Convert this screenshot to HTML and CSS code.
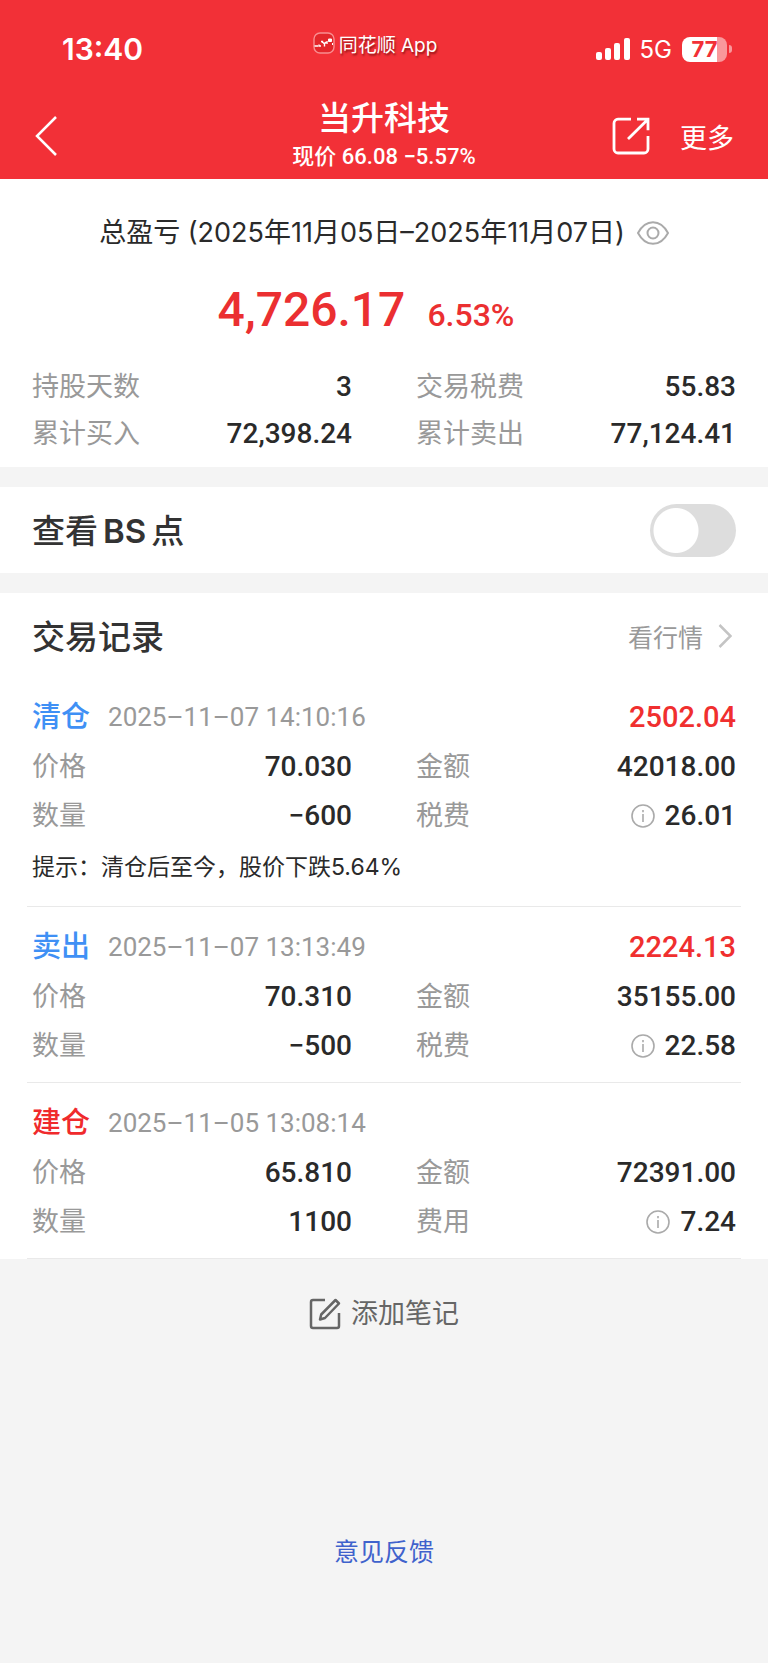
FILE: index.html
```html
<!DOCTYPE html>
<html lang="zh-CN">
<head>
<meta charset="utf-8">
<meta name="viewport" content="width=device-width, initial-scale=1">
<title>当升科技</title>
<link rel="stylesheet" href="styles.css">
</head>
<body>
<header class="top">
  <div class="status">
    <span class="time">13:40</span>
    <span class="app">
      <svg width="22" height="22" viewBox="0 0 22 22" fill="none" aria-hidden="true"><rect x="1" y="1" width="20" height="20" rx="6" fill="#e3262b" stroke="#f88d90" stroke-width="1.4"/><path d="M1.500 14h3.500M6 12.500v1.500h2M8 9.500h1.500v1.500M11.500 10.500v4M10 10.500l1.500 1.500 1.500-2M14 9v3" stroke="#fff" stroke-width="1.400"/><path d="M15.500 7h3v2.500h-3zM19.500 11v2" fill="#fff" stroke="#fff" stroke-width="1"/></svg>
      <span>同花顺 App</span>
    </span>
    <span class="signals">
      <svg width="34" height="24" viewBox="0 0 34 24" fill="#fff" aria-hidden="true"><rect y="15" width="6" height="8" rx="2"/><rect x="9" y="11" width="6" height="12" rx="2"/><rect x="18" y="6" width="6" height="17" rx="2"/><rect x="28" y="1" width="6" height="22" rx="2"/></svg>
      <span class="net">5G</span>
      <span class="battery"><span class="cell">77</span><span class="cap"></span></span>
    </span>
  </div>
  <nav class="nav">
    <button class="icon-btn" aria-label="返回"><svg width="24" height="42" viewBox="0 0 24 42" fill="none" stroke="#fff" stroke-width="2.500"><path d="M22 2 3 21l19 19"/></svg></button>
    <div class="heading">
      <h1>当升科技</h1>
      <p>现价 66.08 −5.57%</p>
    </div>
    <div class="actions">
      <button class="icon-btn" aria-label="分享"><svg width="38" height="38" viewBox="0 0 38 38" fill="none" stroke="#fff" stroke-width="2.800"><path d="M19 2.200H6a4 4 0 0 0-4 4V32a4 4 0 0 0 4 4h26a4 4 0 0 0 4-4V19M25 2.200h11v11M36 2.200 16 22"/></svg></button>
      <button class="more">更多</button>
    </div>
  </nav>
</header>
<main>
  <section class="summary">
    <div class="period"><span>总盈亏 (2025年11月05日–2025年11月07日)</span>
      <button class="icon-btn" aria-label="隐藏金额"><svg width="32" height="24" viewBox="0 0 32 24" fill="none" stroke="#aaa" stroke-width="2"><path d="M1 12C5 4.500 10 1.200 16 1.200S27 4.500 31 12C27 19.500 22 22.800 16 22.800S5 19.500 1 12z"/><circle cx="16" cy="12" r="5.500"/></svg></button>
    </div>
    <div class="profit"><strong>4,726.17</strong><span>6.53%</span></div>
    <dl class="grid">
      <div><dt>持股天数</dt><dd>3</dd></div>
      <div><dt>交易税费</dt><dd>55.83</dd></div>
      <div><dt>累计买入</dt><dd>72,398.24</dd></div>
      <div><dt>累计卖出</dt><dd>77,124.41</dd></div>
    </dl>
  </section>
  <section class="bs">
    <label class="title" for="bs">查看<span class="latin">BS</span>点</label>
    <input class="switch" type="checkbox" role="switch" id="bs">
  </section>
  <section class="records">
    <div class="records-head">
      <h2 class="title">交易记录</h2>
      <a class="quote" href="#">看行情<svg width="14" height="24" viewBox="0 0 14 24" fill="none" stroke="#c4c4c4" stroke-width="2.500"><path d="m1.500 1 11 11-11 11"/></svg></a>
    </div>
    <article class="record">
      <header><h3 class="sell">清仓</h3><time>2025–11–07 14:10:16</time><b>2502.04</b></header>
      <dl class="grid">
        <div><dt>价格</dt><dd>70.030</dd></div>
        <div><dt>金额</dt><dd>42018.00</dd></div>
        <div><dt>数量</dt><dd>−600</dd></div>
        <div><dt>税费</dt><dd><button class="icon-btn" aria-label="税费说明"><svg class="info" viewBox="0 0 24 24" fill="none" stroke="#aaa" stroke-width="1.600"><circle cx="12" cy="12" r="11"/><path d="M12 10v8M12 6v2.200"/></svg></button>26.01</dd></div>
      </dl>
      <p class="tip">提示：清仓后至今，股价下跌5.64%</p>
    </article>
    <article class="record">
      <header><h3 class="sell">卖出</h3><time>2025–11–07 13:13:49</time><b>2224.13</b></header>
      <dl class="grid">
        <div><dt>价格</dt><dd>70.310</dd></div>
        <div><dt>金额</dt><dd>35155.00</dd></div>
        <div><dt>数量</dt><dd>−500</dd></div>
        <div><dt>税费</dt><dd><button class="icon-btn" aria-label="税费说明"><svg class="info" viewBox="0 0 24 24" fill="none" stroke="#aaa" stroke-width="1.600"><circle cx="12" cy="12" r="11"/><path d="M12 10v8M12 6v2.200"/></svg></button>22.58</dd></div>
      </dl>
    </article>
    <article class="record">
      <header><h3 class="buy">建仓</h3><time>2025–11–05 13:08:14</time></header>
      <dl class="grid">
        <div><dt>价格</dt><dd>65.810</dd></div>
        <div><dt>金额</dt><dd>72391.00</dd></div>
        <div><dt>数量</dt><dd>1100</dd></div>
        <div><dt>费用</dt><dd><button class="icon-btn" aria-label="费用说明"><svg class="info" viewBox="0 0 24 24" fill="none" stroke="#aaa" stroke-width="1.600"><circle cx="12" cy="12" r="11"/><path d="M12 10v8M12 6v2.200"/></svg></button>7.24</dd></div>
      </dl>
    </article>
  </section>
</main>
<footer class="foot">
  <button class="note"><svg width="32" height="32" viewBox="0 0 32 32" fill="none" stroke="#666" stroke-width="2.500"><path d="M16 2H4a2 2 0 0 0-2 2v24a2 2 0 0 0 2 2h24a2 2 0 0 0 2-2V15"/><path d="M26.500 2 30 5.500 16 20l-5 1.500L12.200 16.500z" stroke-linejoin="round"/></svg>添加笔记</button>
  <a class="feedback" href="#">意见反馈</a>
</footer>
</body>
</html>
```
FILE: styles.css
```css
* { box-sizing: border-box; }
body, h1, h2, h3, p, dl, dd { margin: 0; }
body {
  background: #f4f4f4;
  color: #2a2a2a;
  font-family: Inter, "Noto Sans CJK SC", sans-serif;
  font-size: 27px;
}
button { padding: 0; border: 0; background: none; color: inherit; font: inherit; }
a { text-decoration: none; }
svg { display: block; }
.icon-btn { display: inline-flex; }

.top { background: #f23037; color: #fff; }
.status {
  display: grid;
  grid-template-columns: 1fr auto 1fr;
  align-items: center;
  height: 98px;
  padding: 0 36px 0 62px;
}
.time { font-size: 30px; font-weight: 600; }
.app {
  display: flex;
  align-items: center;
  gap: 4px;
  padding: 0 44px 12px 0;
  font-size: 19px;
  text-shadow: 1px 2px 2px rgba(80, 0, 0, .6);
}
.signals { display: flex; justify-content: flex-end; align-items: center; gap: 10px; }
.net { font-size: 24px; }
.battery { display: flex; align-items: center; gap: 2px; }
.cell {
  width: 45px;
  border-radius: 8px;
  background: linear-gradient(90deg, #fff 77%, #f9989b 77%);
  color: #f23037;
  font-size: 22px;
  font-weight: 700;
  line-height: 25px;
  text-align: center;
}
.cap { width: 3px; height: 8px; border-radius: 0 4px 4px 0; background: #f9989b; }

.nav {
  display: grid;
  grid-template-columns: 1fr auto 1fr;
  align-items: center;
  height: 81px;
  padding: 0 34px 5px;
}
.heading { text-align: center; }
.heading h1 { font-size: 33px; font-weight: 500; line-height: 40px; }
.heading p {
  margin-top: 2px;
  font-family: Roboto, "Noto Sans CJK SC", sans-serif;
  font-size: 22px;
  font-weight: 500;
  line-height: 34px;
}
.actions { display: flex; justify-content: flex-end; align-items: center; gap: 30px; }

.summary { padding: 27px 32px 10px; background: #fff; }
.period { display: flex; justify-content: center; align-items: center; gap: 12px; line-height: 54px; }
.profit {
  display: flex;
  justify-content: center;
  align-items: baseline;
  gap: 22px;
  padding: 14px 36px 12px 0;
  color: #eb2f31;
  font-family: Roboto, sans-serif;
  line-height: 72px;
}
.profit strong { font-size: 48px; font-weight: 500; }
.profit span { font-size: 32px; font-weight: 500; }

.grid { display: grid; grid-template-columns: 1fr 1fr; column-gap: 64px; line-height: 49px; }
.grid > div { display: flex; justify-content: space-between; }
.summary .grid { line-height: 47px; }
dt { color: #999; }
dd {
  display: flex;
  align-items: center;
  gap: 10px;
  font-family: Roboto, sans-serif;
  font-size: 28px;
  font-weight: 500;
}
.info { width: 24px; height: 24px; }

.bs {
  display: flex;
  justify-content: space-between;
  align-items: center;
  height: 86px;
  margin: 20px 0;
  padding: 0 32px;
  background: #fff;
}
.title { padding-bottom: 2px; color: #333; font-size: 33px; font-weight: 500; }
.latin { margin: 0 5px; font-weight: 600; }
.switch {
  appearance: none;
  width: 86px;
  height: 53px;
  margin: 0;
  border-radius: 27px;
  background: radial-gradient(circle at 26px 50%, #fff 22px, #ddd 23px);
}

.records { background: #fff; }
.records-head {
  display: flex;
  justify-content: space-between;
  align-items: center;
  height: 84px;
  padding: 2px 36px 0 32px;
}
.quote { display: flex; align-items: center; gap: 15px; color: #999; font-size: 25px; }
.record { margin: 0 27px; padding: 15px 5px 12px; border-bottom: 1px solid #e9e9e9; }
.record header { display: flex; align-items: center; font-family: Roboto, "Noto Sans CJK SC", sans-serif; line-height: 50px; }
.record h3 { margin-right: 18px; font-size: 29px; font-weight: 500; }
.sell { color: #3f90f5; }
.buy { color: #f02a2c; }
.record time { color: #999; font-size: 26px; }
.record b { margin-left: auto; color: #f02f2f; font-size: 29px; font-weight: 500; }
.tip { font-size: 23px; line-height: 54px; }

.foot { display: flex; flex-direction: column; align-items: center; padding: 30px 0 86px; }
.note { display: flex; align-items: center; gap: 10px; color: #666; line-height: 50px; }
.feedback { margin-top: 188px; color: #3f62cc; font-size: 25px; line-height: 50px; }
```
